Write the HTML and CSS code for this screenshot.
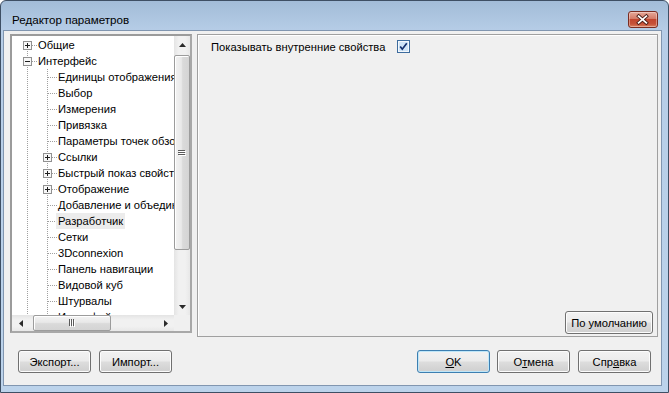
FILE: index.html
```html
<!DOCTYPE html>
<html lang="ru">
<head>
    <meta charset="UTF-8">
    <title>Редактор параметров</title>
    <link rel="stylesheet" href="styles.css">
</head>
<body>
    <div class="window">
        <div class="titlebar">
            <span class="title">Редактор параметров</span>
            <button class="close" aria-label="Закрыть">
                <svg width="30" height="17" viewBox="0 0 30 17">
                    <path d="M11 5L19 12M19 5L11 12" stroke="#4a1c16" stroke-width="3.6" stroke-linecap="square"/>
                    <path d="M11 5L19 12M19 5L11 12" stroke="#fff" stroke-width="1.8" stroke-linecap="square"/>
                </svg>
            </button>
        </div>
        <div class="client">
            <div class="main">
                <div class="tree">
                    <div class="tree-view">
                        <div class="row">
                            <span class="cell half"><svg class="box" width="9" height="9"><rect x="0.5" y="0.5" width="8" height="8" fill="#f7f7f7" stroke="#919191"/><path d="M2 4.5h5M4.5 2v5" stroke="#1e1e1e"/></svg><i class="dash"></i></span>
                            <span class="label">Общие</span>
                        </div>
                        <div class="row">
                            <span class="cell line"><svg class="box" width="9" height="9"><rect x="0.5" y="0.5" width="8" height="8" fill="#f7f7f7" stroke="#919191"/><path d="M2 4.5h5" stroke="#1e1e1e"/></svg><i class="dash"></i></span>
                            <span class="label">Интерфейс</span>
                        </div>
                        <div class="row"><span class="cell line"></span><span class="cell line leaf"><i class="dash"></i></span><span class="label">Единицы отображения</span></div>
                        <div class="row"><span class="cell line"></span><span class="cell line leaf"><i class="dash"></i></span><span class="label">Выбор</span></div>
                        <div class="row"><span class="cell line"></span><span class="cell line leaf"><i class="dash"></i></span><span class="label">Измерения</span></div>
                        <div class="row"><span class="cell line"></span><span class="cell line leaf"><i class="dash"></i></span><span class="label">Привязка</span></div>
                        <div class="row"><span class="cell line"></span><span class="cell line leaf"><i class="dash"></i></span><span class="label">Параметры точек обзора</span></div>
                        <div class="row"><span class="cell line"></span><span class="cell line"><svg class="box" width="9" height="9"><rect x="0.5" y="0.5" width="8" height="8" fill="#f7f7f7" stroke="#919191"/><path d="M2 4.5h5M4.5 2v5" stroke="#1e1e1e"/></svg><i class="dash"></i></span><span class="label">Ссылки</span></div>
                        <div class="row"><span class="cell line"></span><span class="cell line"><svg class="box" width="9" height="9"><rect x="0.5" y="0.5" width="8" height="8" fill="#f7f7f7" stroke="#919191"/><path d="M2 4.5h5M4.5 2v5" stroke="#1e1e1e"/></svg><i class="dash"></i></span><span class="label">Быстрый показ свойств</span></div>
                        <div class="row"><span class="cell line"></span><span class="cell line"><svg class="box" width="9" height="9"><rect x="0.5" y="0.5" width="8" height="8" fill="#f7f7f7" stroke="#919191"/><path d="M2 4.5h5M4.5 2v5" stroke="#1e1e1e"/></svg><i class="dash"></i></span><span class="label">Отображение</span></div>
                        <div class="row"><span class="cell line"></span><span class="cell line leaf"><i class="dash"></i></span><span class="label">Добавление и объединение</span></div>
                        <div class="row"><span class="cell line"></span><span class="cell line leaf"><i class="dash"></i></span><span class="label selected">Разработчик</span></div>
                        <div class="row"><span class="cell line"></span><span class="cell line leaf"><i class="dash"></i></span><span class="label">Сетки</span></div>
                        <div class="row"><span class="cell line"></span><span class="cell line leaf"><i class="dash"></i></span><span class="label">3Dconnexion</span></div>
                        <div class="row"><span class="cell line"></span><span class="cell line leaf"><i class="dash"></i></span><span class="label">Панель навигации</span></div>
                        <div class="row"><span class="cell line"></span><span class="cell line leaf"><i class="dash"></i></span><span class="label">Видовой куб</span></div>
                        <div class="row"><span class="cell line"></span><span class="cell line leaf"><i class="dash"></i></span><span class="label">Штурвалы</span></div>
                        <div class="row"><span class="cell line"></span><span class="cell line leaf"><i class="dash"></i></span><span class="label">Интерфейс пользователя</span></div>
                    </div>
                    <div class="vscroll">
                        <div class="sb-btn">
                            <svg width="7" height="4"><path d="M3.5 0L7 4H0z" fill="#2a2a2a"/></svg>
                        </div>
                        <div class="sb-track">
                            <div class="vthumb">
                                <svg width="8" height="6"><path d="M0 0.5h7M0 2.5h7M0 4.5h7" stroke="#5a5a5a"/><path d="M1 1.5h7M1 3.5h7M1 5.5h7" stroke="#fff"/></svg>
                            </div>
                        </div>
                        <div class="sb-btn">
                            <svg width="7" height="4"><path d="M0 0H7L3.5 4z" fill="#2a2a2a"/></svg>
                        </div>
                    </div>
                    <div class="hscroll">
                        <div class="sb-btn">
                            <svg width="4" height="7"><path d="M4 0V7L0 3.5z" fill="#2a2a2a"/></svg>
                        </div>
                        <div class="sb-track">
                            <div class="hthumb">
                                <svg width="6" height="8"><path d="M0.5 0v7M2.5 0v7M4.5 0v7" stroke="#5a5a5a"/><path d="M1.5 1v7M3.5 1v7M5.5 1v7" stroke="#fff"/></svg>
                            </div>
                        </div>
                        <div class="sb-btn">
                            <svg width="4" height="7"><path d="M0 0L4 3.5L0 7z" fill="#2a2a2a"/></svg>
                        </div>
                    </div>
                    <div class="corner"></div>
                </div>
                <div class="panel">
                    <div class="option">
                        <span>Показывать внутренние свойства</span>
                        <svg class="check" width="13" height="13" viewBox="0 0 13 13">
                            <rect x="0.5" y="0.5" width="12" height="12" fill="#f4f8fc" stroke="#3d6c9e"/>
                            <rect x="2" y="2" width="9" height="9" fill="#cfe4f7"/>
                            <path d="M3.2 6.4L5.3 9.2L9.8 3.2" fill="none" stroke="#14306e" stroke-width="1.7"/>
                        </svg>
                    </div>
                    <button class="btn btn-wide">По умолчанию</button>
                </div>
            </div>
            <div class="footer">
                <button class="btn">Экспорт...</button>
                <button class="btn gap8">Импорт...</button>
                <div class="spacer"></div>
                <button class="btn btn-default"><u>O</u>K</button>
                <button class="btn gap7">О<u>т</u>мена</button>
                <button class="btn gap8">Спр<u>а</u>вка</button>
            </div>
        </div>
    </div>
</body>
</html>
```

FILE: styles.css
```css
body {
    margin: 0;
    padding: 0;
    font-family: "Liberation Sans", Arial, sans-serif;
    font-size: 11.2px;
    color: #000;
}
.window {
    width: 669px;
    height: 393px;
    box-sizing: border-box;
    border: 1px solid #3e4f64;
    border-radius: 6px 6px 0 0;
    background: linear-gradient(to bottom, #a2bcd8 0, #b6cde7 30px, #bcd3eb 100%);
    padding: 0 6px 6px 2px;
    display: flex;
    flex-direction: column;
    overflow: hidden;
}
.titlebar {
    height: 29px;
    box-sizing: border-box;
    padding: 7px 4px 0 9px;
    display: flex;
    align-items: center;
    justify-content: space-between;
}
.title {
    font-size: 11.6px;
    color: #000;
}
.close {
    width: 30px;
    height: 17px;
    padding: 0;
    border: 1px solid #7a2c21;
    border-radius: 3px;
    background: linear-gradient(to bottom, #e6a899 0%, #d57b68 45%, #c2462f 50%, #c65138 80%, #dc8262 100%);
    display: flex;
    align-items: center;
    justify-content: center;
    box-shadow: inset 0 0 0 1px rgba(255,255,255,0.35);
}
.close svg {
    display: block;
    margin-left: -1px;
}
.client {
    flex: 1;
    background-color: #f0f0f0;
    border: 1px solid #8196b0;
    padding: 3px 3px 0 6px;
    display: flex;
    flex-direction: column;
}
.main {
    display: flex;
    align-items: flex-start;
    gap: 5px;
}
.tree {
    width: 182px;
    height: 299px;
    box-sizing: border-box;
    border: 2px solid;
    border-color: #9b9b9b #a8a8a8 #a8a8a8 #9b9b9b;
    display: grid;
    grid-template-columns: 1fr 16px;
    grid-template-rows: 1fr 16px;
    background-color: #fff;
}
.tree-view {
    overflow: hidden;
    padding-top: 1px;
    background-color: #fff;
}
.row {
    display: flex;
    height: 16px;
    padding-left: 5px;
    white-space: nowrap;
}
.cell {
    width: 20px;
    height: 16px;
    flex: none;
    display: flex;
    align-items: flex-start;
}
.line {
    background: linear-gradient(#a0a0a0 50%, transparent 50%) 10px 0 / 1px 2px repeat-y;
}
.half {
    background: linear-gradient(#fff, #fff) 0 0 / 100% 8px no-repeat,
        linear-gradient(#a0a0a0 50%, transparent 50%) 10px 0 / 1px 2px repeat-y;
}
.leaf {
    padding-left: 11px;
    box-sizing: border-box;
}
.box {
    display: block;
    flex: none;
    margin: 4px 0 0 6px;
}
.dash {
    display: block;
    flex: 1;
    height: 1px;
    margin-top: 8px;
    background: linear-gradient(to right, #a0a0a0 50%, transparent 50%) 0 0 / 2px 1px repeat-x;
}
.label {
    line-height: 16px;
    padding: 0 2px;
    margin-left: -1px;
}
.label.selected {
    background-color: #ececec;
}
.vscroll {
    display: flex;
    flex-direction: column;
    background: linear-gradient(to right, #e4e4e4, #f1f1f1 30%, #f1f1f1 70%, #e8e8e8);
}
.hscroll {
    display: flex;
    background: linear-gradient(to bottom, #e4e4e4, #f1f1f1 30%, #f1f1f1 70%, #e8e8e8);
}
.corner {
    background-color: #f0f0f0;
}
.sb-btn {
    flex: none;
    width: 16px;
    height: 17px;
    display: flex;
    align-items: center;
    justify-content: center;
}
.hscroll .sb-btn {
    width: 17px;
    height: 16px;
}
.sb-btn svg {
    display: block;
}
.sb-track {
    flex: 1;
    display: flex;
}
.vscroll .sb-track {
    flex-direction: column;
}
.vthumb {
    margin: 2px 0 0 0;
    height: 195px;
    box-sizing: border-box;
    border: 1px solid #9c9c9c;
    border-radius: 2px;
    background: linear-gradient(to right, #f3f3f3 0%, #e9e9e9 45%, #dadada 55%, #d4d4d4 100%);
    box-shadow: inset 1px 1px 0 #fff;
    display: flex;
    align-items: center;
    justify-content: center;
}
.hthumb {
    margin-left: 4px;
    width: 78px;
    box-sizing: border-box;
    border: 1px solid #9c9c9c;
    border-radius: 2px;
    background: linear-gradient(to bottom, #f3f3f3 0%, #e9e9e9 45%, #dadada 55%, #d4d4d4 100%);
    box-shadow: inset 1px 1px 0 #fff;
    display: flex;
    align-items: center;
    justify-content: center;
}
.panel {
    flex: 1;
    height: 303px;
    box-sizing: border-box;
    border: 1px solid #a0a0a0;
    box-shadow: inset 1px 1px 0 #fff;
    display: flex;
    flex-direction: column;
    justify-content: space-between;
}
.option {
    display: flex;
    align-items: center;
    height: 16px;
    margin-top: 4px;
    padding-left: 13px;
}
.check {
    display: block;
    margin-left: 12px;
    margin-top: -2px;
}
.btn {
    width: 73px;
    height: 23px;
    padding: 0;
    font-family: "Liberation Sans", Arial, sans-serif;
    font-size: 11.2px;
    color: #000;
    border: 1px solid #707070;
    border-radius: 3px;
    background: linear-gradient(to bottom, #f2f2f2 0%, #ebebeb 48%, #dddddd 52%, #cfcfcf 100%);
    box-shadow: inset 0 0 0 1px #fcfcfc;
    flex: none;
}
.btn u {
    text-decoration: underline;
}
.btn-wide {
    width: 88px;
    align-self: flex-end;
    margin: 0 4px 2px 0;
}
.btn-default {
    border-color: #3c7fb1;
    box-shadow: inset 0 0 0 1px #bfe6f8;
}
.footer {
    display: flex;
    margin-top: 13px;
    padding: 0 7px 0 8px;
}
.spacer {
    flex: 1;
}
.gap8 {
    margin-left: 8px;
}
.gap7 {
    margin-left: 7px;
}
```
